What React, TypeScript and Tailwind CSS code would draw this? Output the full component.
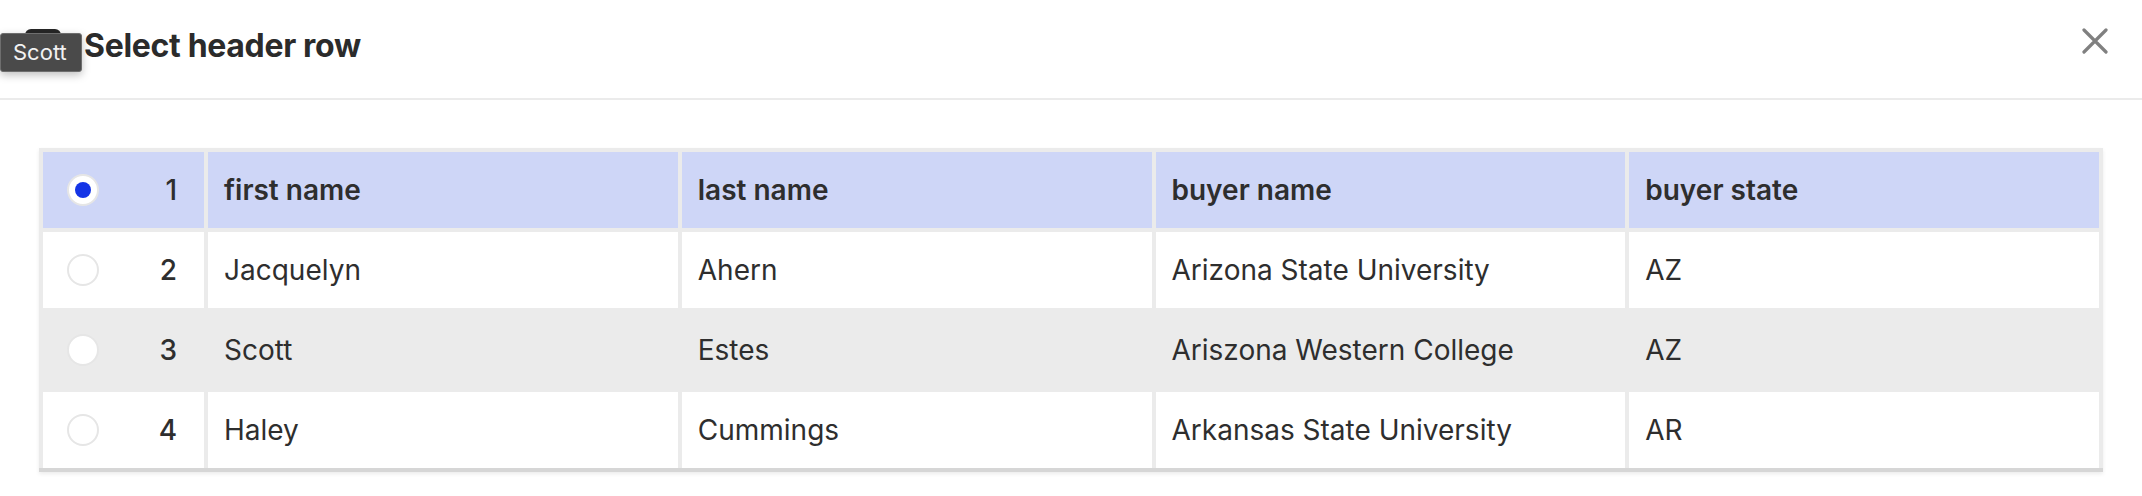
import React from 'react';

type Row = { id: number; cells: string[] };

const rows: Row[] = [
  { id: 1, cells: ['first name', 'last name', 'buyer name', 'buyer state'] },
  { id: 2, cells: ['Jacquelyn', 'Ahern', 'Arizona State University', 'AZ'] },
  { id: 3, cells: ['Scott', 'Estes', 'Ariszona Western College', 'AZ'] },
  { id: 4, cells: ['Haley', 'Cummings', 'Arkansas State University', 'AR'] },
];

const App: React.FC = () => {
  const selected = 1;
  const hovered = 3;

  return (
    <div className="relative min-h-[496px] w-full bg-white font-['Inter','Liberation_Sans',sans-serif] text-[#2e2e2e]">
      {/* 顶部标题 */}
      <div className="flex h-[98px] items-start border-b-2 border-[#ebebeb] box-content">
        <div className="ml-[25px] mt-[29px] h-[36px] w-[36px] rounded-md bg-[#262626]" />
        <h1 className="ml-[23px] mt-[26px] text-[32px] font-bold leading-[39px] tracking-[-0.01em] text-[#2b2b2b]">Select header row</h1>
        <button className="ml-auto mr-[34px] mt-[28px] h-[26px] w-[26px] text-[#808080]">
          <svg viewBox="0 0 26 26" className="h-[26px] w-[26px]" fill="none" stroke="currentColor" strokeWidth={3.2} strokeLinecap="round">
            <path d="M2 2l22 22M24 2L2 24" />
          </svg>
        </button>
      </div>

      {/* 表格 */}
      <div className="px-[39px] pt-[48px]">
        <table className="w-full table-fixed border-separate border-spacing-1 bg-[#ebebeb] text-[28px] shadow-[inset_0_-4px_0_#d6d6d6,0_2px_4px_rgba(0,0,0,0.08)]">
          <colgroup>
            <col className="w-[161px]" />
            <col />
            <col />
            <col />
            <col />
          </colgroup>
          <tbody>
            {rows.map((row) => {
              const isSel = row.id === selected;
              const isHover = row.id === hovered;
              const bg = isSel ? 'bg-[#ced6f7]' : isHover ? 'bg-[#ebebeb]' : 'bg-white';
              return (
                <tr key={row.id}>
                  <td className={`h-[76px] p-0 ${bg}`}>
                    <div className="flex items-center justify-between pl-[24px] pr-[27px]">
                      <span className="flex h-[32px] w-[32px] items-center justify-center rounded-full border-2 border-[#e6e6e6] bg-white">
                        {isSel && <span className="h-[16px] w-[16px] rounded-full bg-[#1434e6]" />}
                      </span>
                      <span className="font-medium">{row.id}</span>
                    </div>
                  </td>
                  {row.cells.map((c, i) => (
                    <td key={i} className={`h-[76px] px-[16px] py-0 align-middle ${bg} ${isSel ? 'font-semibold' : ''}`}>
                      {c}
                    </td>
                  ))}
                </tr>
              );
            })}
          </tbody>
        </table>
      </div>

      {/* 悬停提示 */}
      <div className="absolute left-0 top-[33px] flex h-[39px] w-[82px] items-center rounded-[3px] border border-[#6e6e6e] bg-[#4a4a4a] pl-[12px] text-[22px] text-[#f2f2f2] shadow-[0_3px_8px_rgba(0,0,0,0.25)]">
        Scott
      </div>
    </div>
  );
};

export default App;
